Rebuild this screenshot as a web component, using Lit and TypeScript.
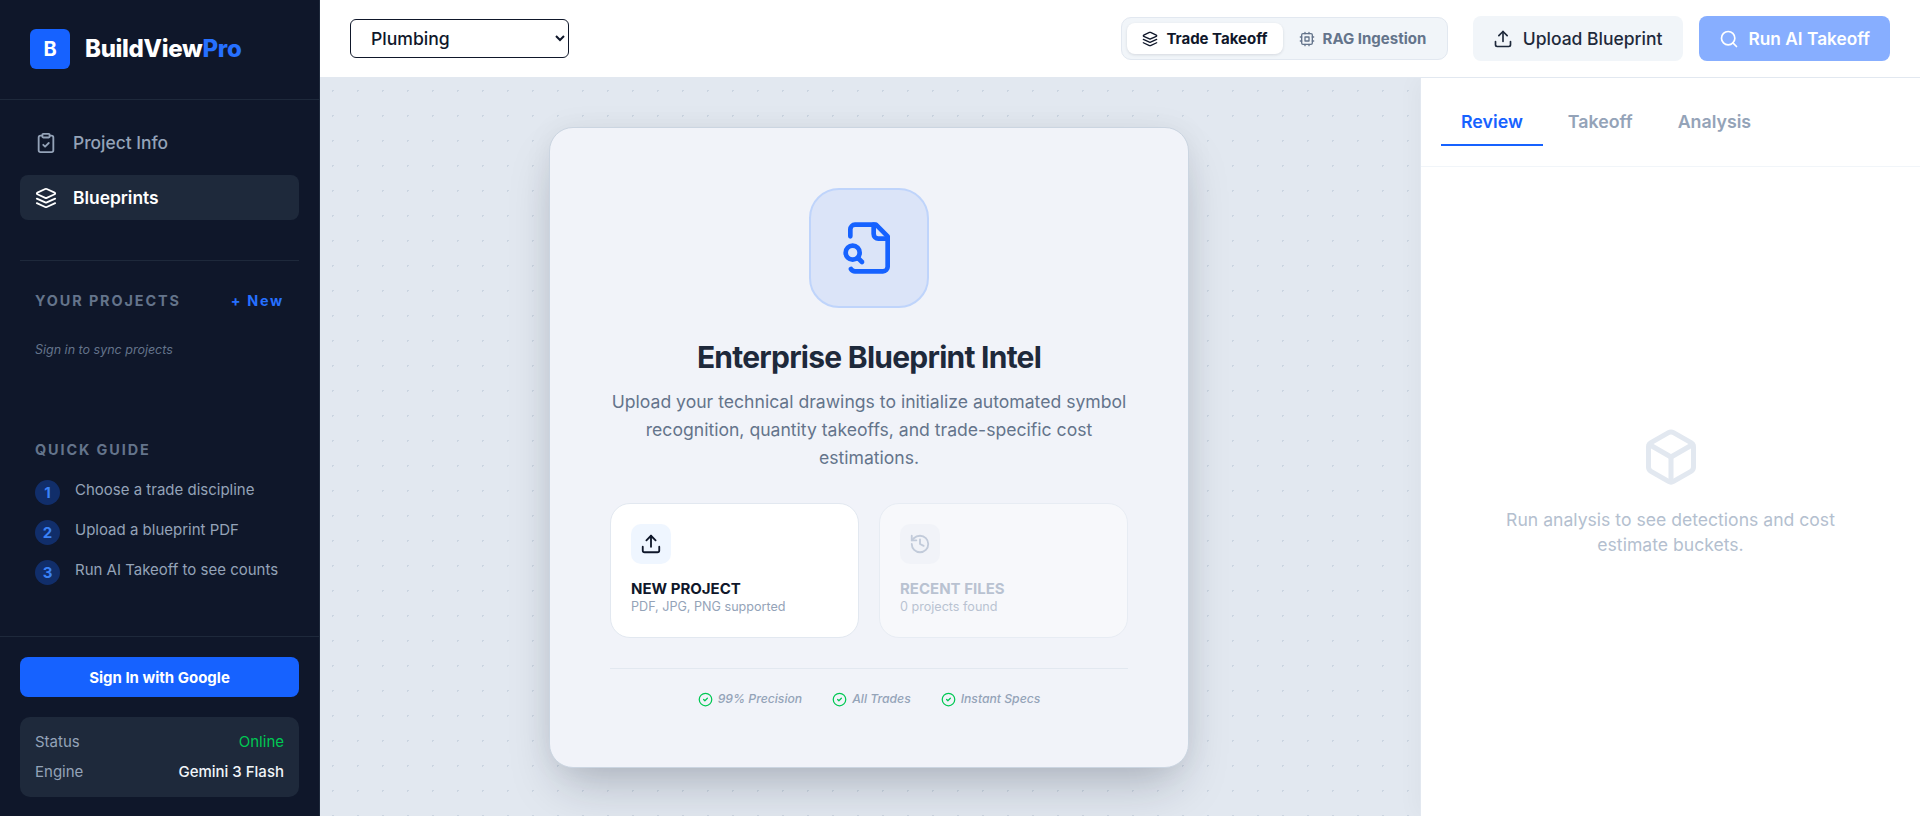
import { LitElement, html, css, svg } from "lit";
import { customElement } from "lit/decorators.js";

const ICONS: Record<string, unknown> = {
  clipboard: svg`<rect x="8" y="2" width="8" height="4" rx="1" ry="1"/><path d="M16 4h2a2 2 0 0 1 2 2v14a2 2 0 0 1-2 2H6a2 2 0 0 1-2-2V6a2 2 0 0 1 2-2h2"/><path d="m9 14 2 2 4-4"/>`,
  layers: svg`<path d="m12.83 2.18a2 2 0 0 0-1.66 0L2.6 6.08a1 1 0 0 0 0 1.83l8.58 3.91a2 2 0 0 0 1.66 0l8.58-3.9a1 1 0 0 0 0-1.83Z"/><path d="m22 17.65-9.17 4.16a2 2 0 0 1-1.66 0L2 17.65"/><path d="m22 12.65-9.17 4.16a2 2 0 0 1-1.66 0L2 12.65"/>`,
  cpu: svg`<rect x="4" y="4" width="16" height="16" rx="2"/><rect x="9" y="9" width="6" height="6"/><path d="M15 2v2M15 20v2M2 15h2M2 9h2M20 15h2M20 9h2M9 2v2M9 20v2"/>`,
  upload: svg`<path d="M21 15v4a2 2 0 0 1-2 2H5a2 2 0 0 1-2-2v-4"/><polyline points="17 8 12 3 7 8"/><line x1="12" x2="12" y1="3" y2="15"/>`,
  search: svg`<circle cx="11" cy="11" r="8"/><path d="m21 21-4.3-4.3"/>`,
  fileSearch: svg`<path d="M4.268 21a2 2 0 0 0 1.727 1H18a2 2 0 0 0 2-2V7l-5-5H6a2 2 0 0 0-2 2v3"/><path d="M14 2v4a2 2 0 0 0 2 2h4"/><path d="m9 18-1.5-1.5"/><circle cx="5" cy="14" r="3"/>`,
  history: svg`<path d="M3 12a9 9 0 1 0 9-9 9.75 9.75 0 0 0-6.74 2.74L3 8"/><path d="M3 3v5h5"/><path d="M12 7v5l4 2"/>`,
  check: svg`<circle cx="12" cy="12" r="10"/><path d="m9 12 2 2 4-4"/>`,
  box: svg`<path d="M21 8a2 2 0 0 0-1-1.73l-7-4a2 2 0 0 0-2 0l-7 4A2 2 0 0 0 3 8v8a2 2 0 0 0 1 1.73l7 4a2 2 0 0 0 2 0l7-4A2 2 0 0 0 21 16Z"/><path d="m3.3 7 8.7 5 8.7-5"/><path d="M12 22V12"/>`,
};

function icon(name: string, size: number) {
  return html`<svg
    class="icon"
    width=${size}
    height=${size}
    viewBox="0 0 24 24"
    fill="none"
    stroke="currentColor"
    stroke-width="2"
    stroke-linecap="round"
    stroke-linejoin="round"
  >
    ${ICONS[name]}
  </svg>`;
}

@customElement("app-root")
export class AppRoot extends LitElement {
  static styles = css`
    :host {
      display: flex;
      width: 100%;
      height: 816px;
      overflow: hidden;
      font-family: Inter, "Liberation Sans", sans-serif;
      color: #0f172a;
    }
    .icon {
      flex: none;
      display: block;
    }

    /* sidebar */
    .sidebar {
      width: 320px;
      flex: none;
      box-sizing: border-box;
      border-right: 1px solid #1e293b;
      background: #0f172a;
      display: flex;
      flex-direction: column;
    }
    .brand {
      height: 100px;
      box-sizing: border-box;
      padding: 29px 30px 0;
      border-bottom: 1px solid #1e293b;
      display: flex;
      align-items: flex-start;
      gap: 15px;
    }
    .logo {
      width: 40px;
      height: 40px;
      border-radius: 6px;
      background: #1662ff;
      color: #fff;
      font-size: 20px;
      font-weight: 700;
      display: flex;
      align-items: center;
      justify-content: center;
    }
    .brand-name {
      font-size: 24px;
      line-height: 40px;
      font-weight: 800;
      letter-spacing: -0.3px;
      color: #fff;
    }
    .brand-name span {
      color: #2670ff;
    }
    .body {
      flex: 1;
      padding: 20px;
    }
    .nav {
      display: flex;
      flex-direction: column;
      gap: 10px;
      padding-bottom: 40px;
      border-bottom: 1px solid #1e293b;
    }
    .nav-item {
      height: 45px;
      padding: 0 15px;
      border-radius: 8px;
      display: flex;
      align-items: center;
      gap: 16px;
      font-size: 17.4px;
      font-weight: 500;
      color: #94a3b8;
    }
    .nav-item.active {
      background: #1e293b;
      color: #fff;
      font-weight: 600;
    }
    .section-head {
      margin-top: 29px;
      padding: 0 15px;
      display: flex;
      justify-content: space-between;
      align-items: center;
      height: 20px;
    }
    .label {
      font-size: 14.4px;
      font-weight: 700;
      letter-spacing: 1.9px;
      color: #64748b;
    }
    .new-link {
      font-size: 14.4px;
      font-weight: 700;
      letter-spacing: 1.7px;
      color: #2670ff;
    }
    .sync {
      margin: 32px 15px 0;
      font-size: 12.5px;
      line-height: 16px;
      font-style: italic;
      color: #64748b;
    }
    .guide {
      margin: 82px 15px 0;
    }
    .guide .label {
      line-height: 20px;
    }
    .steps {
      margin-top: 20px;
      display: flex;
      flex-direction: column;
      gap: 15px;
    }
    .step {
      display: flex;
      align-items: flex-start;
      gap: 15px;
      font-size: 15px;
      line-height: 20px;
      color: #94a3b8;
    }
    .step-num {
      width: 25px;
      height: 25px;
      flex: none;
      border-radius: 50%;
      background: rgba(22, 98, 255, 0.3);
      color: #3b82f6;
      font-size: 15px;
      font-weight: 700;
      display: flex;
      align-items: center;
      justify-content: center;
    }
    .foot {
      height: 180px;
      box-sizing: border-box;
      padding: 20px;
      border-top: 1px solid #1e293b;
      display: flex;
      flex-direction: column;
      gap: 20px;
    }
    .signin {
      height: 40px;
      flex: none;
      border-radius: 8px;
      background: #1662ff;
      color: #fff;
      font-size: 15px;
      font-weight: 700;
      display: flex;
      align-items: center;
      justify-content: center;
    }
    .status {
      height: 80px;
      flex: none;
      box-sizing: border-box;
      padding: 15px;
      border-radius: 10px;
      background: #1e293b;
      display: flex;
      flex-direction: column;
      gap: 10px;
      font-size: 15px;
      line-height: 20px;
      color: #94a3b8;
    }
    .status div {
      display: flex;
      justify-content: space-between;
    }
    .online {
      color: #00c853;
    }
    .engine {
      color: #f1f5f9;
      font-weight: 500;
    }

    /* right of the sidebar */
    .page {
      flex: 1;
      min-width: 0;
      display: flex;
      flex-direction: column;
    }
    .topbar {
      height: 78px;
      flex: none;
      box-sizing: border-box;
      padding: 0 30px;
      background: #fff;
      border-bottom: 1px solid #e2e8f0;
      display: flex;
      align-items: center;
      position: relative;
      z-index: 2;
    }
    .trade {
      width: 219px;
      height: 39px;
      padding: 0 0 0 16px;
      border: 1px solid #0f172a;
      border-radius: 6px;
      background: #fff;
      color: #0f172a;
      font: 500 17.6px Inter, sans-serif;
    }
    .toggle {
      margin-left: auto;
      margin-right: 25px;
      height: 43px;
      box-sizing: border-box;
      padding: 5px;
      border: 1px solid #e2e8f0;
      border-radius: 10px;
      background: #f1f5f9;
      display: flex;
    }
    .toggle-btn {
      padding: 0 15.5px;
      border-radius: 8px;
      display: flex;
      align-items: center;
      gap: 8px;
      font-size: 15px;
      font-weight: 700;
      color: #64748b;
    }
    .toggle-btn.active {
      background: #fff;
      color: #0f172a;
      box-shadow: 0 1px 3px rgba(15, 23, 42, 0.12);
    }
    .action {
      height: 45px;
      box-sizing: border-box;
      padding: 0 20px;
      border-radius: 8px;
      display: flex;
      align-items: center;
      gap: 10px;
      font-size: 17.5px;
    }
    .action.upload {
      background: #f1f5f9;
      color: #1e293b;
      font-weight: 500;
    }
    .action.run {
      margin-left: 16px;
      background: #87aeff;
      color: #fff;
      font-size: 17.3px;
      font-weight: 600;
    }
    .work {
      flex: 1;
      min-height: 0;
      display: flex;
    }
    .canvas {
      flex: 1;
      min-width: 0;
      display: flex;
      align-items: center;
      justify-content: center;
      background-color: #e2e8f0;
      background-image: radial-gradient(#cbd5e1 1px, transparent 1px);
      background-size: 25px 25px;
    }
    .card {
      width: 640px;
      margin: 1px 2px 0 0;
      box-sizing: border-box;
      padding: 60px;
      border: 1px solid #cbd5e1;
      border-radius: 24px;
      background: #f1f3f9;
      box-shadow: 0 25px 50px -12px rgba(15, 23, 42, 0.25),
        0 0 30px rgba(15, 23, 42, 0.05);
      display: flex;
      flex-direction: column;
      align-items: center;
    }
    .hero {
      width: 120px;
      height: 120px;
      box-sizing: border-box;
      border: 2px solid #bfd4fb;
      border-radius: 30px;
      background: #dbe4f8;
      color: #1662ff;
      display: flex;
      align-items: center;
      justify-content: center;
    }
    h1 {
      margin: 29px 0 0;
      font-size: 30px;
      line-height: 40px;
      font-weight: 700;
      letter-spacing: -0.75px;
      color: #1e293b;
    }
    .lead {
      margin: 11px 0 0;
      font-size: 17.6px;
      line-height: 28px;
      color: #64748b;
      text-align: center;
    }
    .choices {
      align-self: stretch;
      margin-top: 31px;
      display: grid;
      grid-template-columns: 1fr 1fr;
      gap: 20px;
    }
    .choice {
      height: 135px;
      box-sizing: border-box;
      padding: 20px;
      border: 1px solid #e2e8f0;
      border-radius: 20px;
      background: #fff;
    }
    .choice.off {
      background: #fbfcfd;
      opacity: 0.6;
    }
    .tile {
      width: 40px;
      height: 40px;
      border-radius: 10px;
      background: #eff6ff;
      color: #0f172a;
      display: flex;
      align-items: center;
      justify-content: center;
    }
    .off .tile {
      background: #f2f4f8;
      color: #a3b1c6;
    }
    .choice-title {
      margin-top: 15px;
      font-size: 15px;
      line-height: 20px;
      font-weight: 700;
      color: #0f172a;
    }
    .off .choice-title {
      color: #94a3b8;
    }
    .choice-sub {
      font-size: 12.6px;
      line-height: 16px;
      color: #94a3b8;
    }
    .features {
      align-self: stretch;
      margin-top: 30px;
      padding-top: 22px;
      border-top: 1px solid #e2e8f0;
      display: flex;
      justify-content: center;
      gap: 30px;
    }
    .feature {
      display: flex;
      align-items: center;
      gap: 5px;
      font-size: 12.2px;
      line-height: 16px;
      font-style: italic;
      font-weight: 500;
      color: #94a3b8;
    }
    .feature .icon {
      color: #00c853;
    }

    /* review panel */
    .panel {
      width: 500px;
      flex: none;
      box-sizing: border-box;
      border-left: 1px solid #e2e8f0;
      background: #fff;
      box-shadow: -5px 0 20px rgba(15, 23, 42, 0.03);
      display: flex;
      flex-direction: column;
      position: relative;
    }
    .tabs {
      height: 89px;
      box-sizing: border-box;
      padding: 22px 20px 20px;
      border-bottom: 1px solid #f1f5f9;
      display: flex;
      gap: 5px;
    }
    .tab {
      padding: 0 20px;
      font-size: 17.8px;
      line-height: 44px;
      font-weight: 600;
      color: #94a3b8;
      border-bottom: 2px solid transparent;
    }
    .tab.active {
      color: #1662ff;
      border-bottom-color: #1662ff;
    }
    .empty {
      flex: 1;
      padding: 0 60px;
      display: flex;
      flex-direction: column;
      align-items: center;
      justify-content: center;
      gap: 20px;
      color: #e2e8f0;
    }
    .empty p {
      margin: 0;
      font-size: 17.6px;
      line-height: 25px;
      text-align: center;
      color: #b4bfcf;
    }
  `;

  render() {
    return html`
      <aside class="sidebar">
        <div class="brand">
          <div class="logo">B</div>
          <div class="brand-name">BuildView<span>Pro</span></div>
        </div>
        <div class="body">
          <nav class="nav">
            <div class="nav-item">${icon("clipboard", 22)}Project Info</div>
            <div class="nav-item active">${icon("layers", 22)}Blueprints</div>
          </nav>
          <div class="section-head">
            <span class="label">YOUR PROJECTS</span>
            <span class="new-link">+ New</span>
          </div>
          <div class="sync">Sign in to sync projects</div>
          <div class="guide">
            <div class="label">QUICK GUIDE</div>
            <div class="steps">
              <div class="step"><span class="step-num">1</span>Choose a trade discipline</div>
              <div class="step"><span class="step-num">2</span>Upload a blueprint PDF</div>
              <div class="step"><span class="step-num">3</span>Run AI Takeoff to see counts</div>
            </div>
          </div>
        </div>
        <div class="foot">
          <div class="signin">Sign In with Google</div>
          <div class="status">
            <div><span>Status</span><span class="online">Online</span></div>
            <div><span>Engine</span><span class="engine">Gemini 3 Flash</span></div>
          </div>
        </div>
      </aside>
      <div class="page">
        <header class="topbar">
          <select class="trade">
            <option>Plumbing</option>
          </select>
          <div class="toggle">
            <div class="toggle-btn active">${icon("layers", 16)}Trade Takeoff</div>
            <div class="toggle-btn">${icon("cpu", 16)}RAG Ingestion</div>
          </div>
          <div class="action upload">${icon("upload", 20)}Upload Blueprint</div>
          <div class="action run">${icon("search", 20)}Run AI Takeoff</div>
        </header>
        <div class="work">
          <main class="canvas">
            <section class="card">
              <div class="hero">${icon("fileSearch", 56)}</div>
              <h1>Enterprise Blueprint Intel</h1>
              <p class="lead">
                Upload your technical drawings to initialize automated symbol
                recognition, quantity takeoffs, and trade-specific cost
                estimations.
              </p>
              <div class="choices">
                <div class="choice">
                  <div class="tile">${icon("upload", 22)}</div>
                  <div class="choice-title">NEW PROJECT</div>
                  <div class="choice-sub">PDF, JPG, PNG supported</div>
                </div>
                <div class="choice off">
                  <div class="tile">${icon("history", 22)}</div>
                  <div class="choice-title">RECENT FILES</div>
                  <div class="choice-sub">0 projects found</div>
                </div>
              </div>
              <div class="features">
                <span class="feature">${icon("check", 15)}99% Precision</span>
                <span class="feature">${icon("check", 15)}All Trades</span>
                <span class="feature">${icon("check", 15)}Instant Specs</span>
              </div>
            </section>
          </main>
          <aside class="panel">
            <div class="tabs">
              <div class="tab active">Review</div>
              <div class="tab">Takeoff</div>
              <div class="tab">Analysis</div>
            </div>
            <div class="empty">
              ${icon("box", 60)}
              <p>Run analysis to see detections and cost estimate buckets.</p>
            </div>
          </aside>
        </div>
      </div>
    `;
  }
}
